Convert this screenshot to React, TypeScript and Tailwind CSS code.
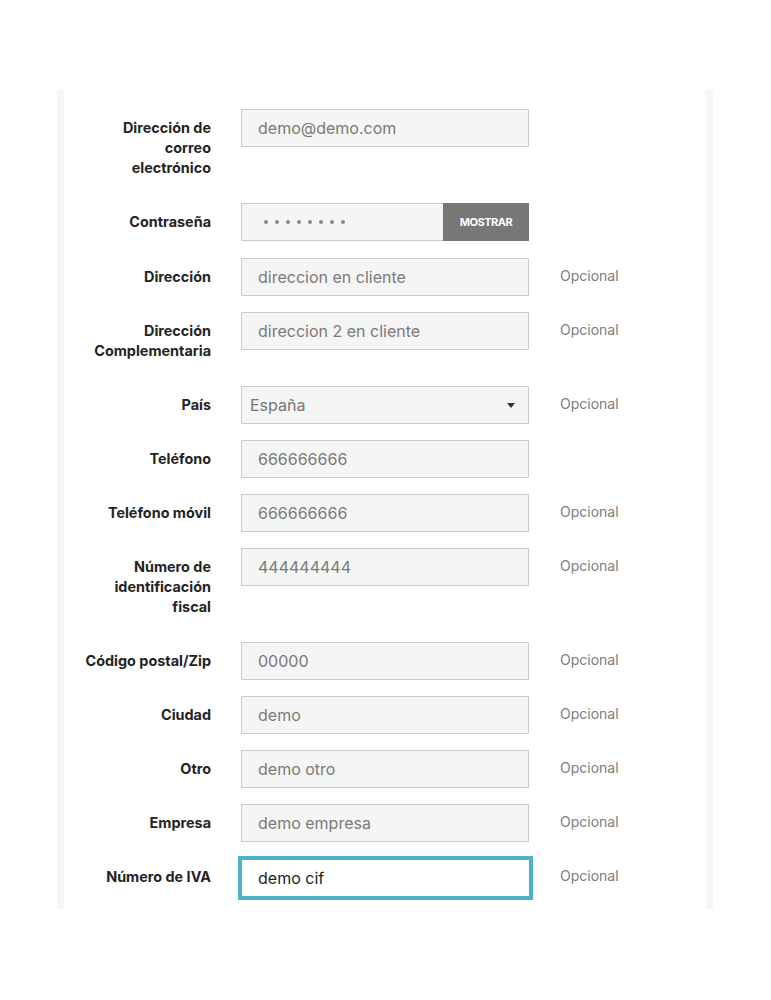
import React from "react";

type Row = {
  label: string[];
  value: string;
  optional?: boolean;
  kind?: "text" | "password" | "select" | "focused";
};

const rows: Row[] = [
  { label: ["Dirección de", "correo", "electrónico"], value: "demo@demo.com" },
  { label: ["Contraseña"], value: "", kind: "password" },
  { label: ["Dirección"], value: "direccion en cliente", optional: true },
  { label: ["Dirección", "Complementaria"], value: "direccion 2 en cliente", optional: true },
  { label: ["País"], value: "España", optional: true, kind: "select" },
  { label: ["Teléfono"], value: "666666666" },
  { label: ["Teléfono móvil"], value: "666666666", optional: true },
  { label: ["Número de", "identificación", "fiscal"], value: "444444444", optional: true },
  { label: ["Código postal/Zip"], value: "00000", optional: true },
  { label: ["Ciudad"], value: "demo", optional: true },
  { label: ["Otro"], value: "demo otro", optional: true },
  { label: ["Empresa"], value: "demo empresa", optional: true },
  { label: ["Número de IVA"], value: "demo cif", optional: true, kind: "focused" },
];

function Field({ row }: { row: Row }) {
  if (row.kind === "password") {
    return (
      <div className="flex h-[38px] w-[288px]">
        <div className="flex flex-1 items-center gap-[7px] border border-[#cbcbcb] border-r-0 bg-[#f5f5f5] pl-[22px]">
          {Array.from({ length: 8 }).map((_, i) => (
            <span key={i} className="block h-[4px] w-[4px] rounded-full bg-[#8a8a8a]" />
          ))}
        </div>
        <div className="flex w-[86px] items-center justify-center bg-[#777777] text-[11px] font-bold tracking-[-0.5px] text-white">
          MOSTRAR
        </div>
      </div>
    );
  }
  if (row.kind === "select") {
    return (
      <div className="flex h-[38px] w-[288px] items-center justify-between border border-[#cbcbcb] bg-[#f5f5f5] pl-[8px] pr-[13px] text-[16px] text-[#777777]">
        <span>{row.value}</span>
        <svg width="8" height="5" viewBox="0 0 8 5">
          <path d="M0 0 L8 0 L4 5 Z" fill="#333" />
        </svg>
      </div>
    );
  }
  if (row.kind === "focused") {
    return (
      <div className="mt-[1px] flex h-[38px] w-[289px] items-center border border-[#4bb3c8] bg-white pl-[16px] text-[16px] text-[#232323] outline outline-[3px] outline-[#4bb3c8]">
        {row.value}
      </div>
    );
  }
  return (
    <div className="flex h-[38px] w-[288px] items-center border border-[#cbcbcb] bg-[#f5f5f5] pl-[16px] text-[16px] text-[#7a7a7a]">
      {row.value}
    </div>
  );
}

export default function App() {
  return (
    <div className="min-h-[1000px] bg-white pt-[90px]" style={{ fontFamily: "Inter, 'Noto Sans', sans-serif" }}>
      <div className="ml-[57px] w-[656px] bg-[#f6f6f6] px-[7px]">
        <div className="bg-white pb-[12px] pt-[19px]">
          {rows.map((row, i) => (
            <div
              key={i}
              className={`flex items-start ${i === rows.length - 1 ? "" : row.kind === "password" ? "mb-[17px]" : "mb-[16px]"}`}
            >
              <div className="w-[147px] shrink-0 pl-[10px] py-[9px] text-right text-[14.4px] font-bold leading-[20px] text-[#232323]">
                {row.label.map((l, j) => (
                  <div key={j}>{l}</div>
                ))}
              </div>
              <div className="ml-[30px] shrink-0">
                <Field row={row} />
              </div>
              {row.optional && (
                <div className={`${row.kind === "focused" ? "ml-[30px]" : "ml-[31px]"} pt-[8px] text-[14px] leading-[20px] text-[#7d7d7d]`}>
                  Opcional
                </div>
              )}
            </div>
          ))}
        </div>
      </div>
    </div>
  );
}
